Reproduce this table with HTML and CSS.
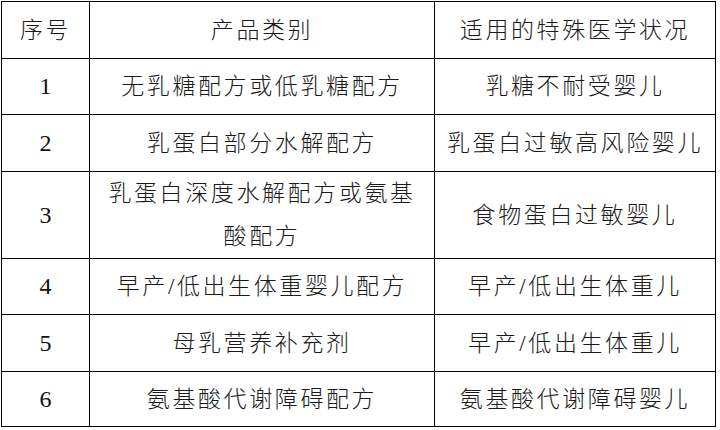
FILE: index.html
```html
<!DOCTYPE html>
<html lang="zh">
<head>
<meta charset="utf-8">
<link rel="stylesheet" href="styles.css">
</head>
<body>
<table class="tbl">
  <colgroup><col class="c1"><col class="c2"><col class="c3"></colgroup>
  <tr class="r-head"><th>序号</th><th>产品类别</th><th>适用的特殊医学状况</th></tr>
  <tr class="r1"><td class="num">1</td><td>无乳糖配方或低乳糖配方</td><td>乳糖不耐受婴儿</td></tr>
  <tr class="r2"><td class="num">2</td><td>乳蛋白部分水解配方</td><td>乳蛋白过敏高风险婴儿</td></tr>
  <tr class="r3"><td class="num">3</td><td class="wrap">乳蛋白深度水解配方或氨基酸配方</td><td>食物蛋白过敏婴儿</td></tr>
  <tr class="r4"><td class="num">4</td><td>早产/低出生体重婴儿配方</td><td>早产/低出生体重儿</td></tr>
  <tr class="r5"><td class="num">5</td><td>母乳营养补充剂</td><td>早产/低出生体重儿</td></tr>
  <tr class="r6"><td class="num">6</td><td>氨基酸代谢障碍配方</td><td>氨基酸代谢障碍婴儿</td></tr>
</table>
</body>
</html>
```
FILE: styles.css
```css
html, body { margin: 0; padding: 0; background: #fff; }
body { padding: 1px 0 0 1px; }
.tbl {
  border-collapse: collapse;
  table-layout: fixed;
  width: 715px;
  font-family: "Liberation Serif", "Noto Sans CJK SC", serif;
  font-size: 23px;
  color: #1a1a1a;
}
.c1 { width: 88px; }
.c2 { width: 345px; }
.c3 { width: 281px; }
.tbl th, .tbl td {
  border: 1.5px solid #000;
  text-align: center;
  vertical-align: middle;
  font-weight: 200;
  letter-spacing: 2.6px;
  line-height: 43px;
  padding: 0 12px;
}
.tbl th { font-weight: 200; }
.tbl td.num { padding: 0; letter-spacing: 0; font-size: 24px; font-weight: 400; color: #111; }
.r-head { height: 57px; }
.r1 { height: 56px; }
.r2 { height: 57px; }
.r3 { height: 87px; }
.r4 { height: 56px; }
.r5 { height: 57px; }
.r6 { height: 55px; }
```
